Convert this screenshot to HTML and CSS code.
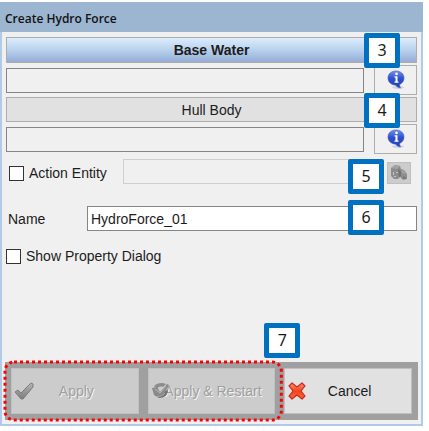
FILE: index.html
```
<!DOCTYPE html>
<html lang="en">

<head>
  <meta charset="utf-8" />
  <meta name="viewport" content="width=device-width, initial-scale=1" />
  <title>Create Hydro Force</title>
  <link rel="stylesheet" href="styles.css">
</head>

<body>
  <!-- shared icon shapes -->
  <svg class="defs" aria-hidden="true">
    <defs>
      <linearGradient id="bubble" x1="0" y1="0" x2="0" y2="1">
        <stop offset="0" stop-color="#6f8fe8" />
        <stop offset="0.45" stop-color="#2c50cf" />
        <stop offset="1" stop-color="#2741b4" />
      </linearGradient>
      <linearGradient id="cross" x1="0" y1="0" x2="0" y2="1">
        <stop offset="0" stop-color="#ff9270" />
        <stop offset="0.5" stop-color="#f4431f" />
        <stop offset="1" stop-color="#ff6a2c" />
      </linearGradient>
      <linearGradient id="check" x1="0" y1="0" x2="0" y2="1">
        <stop offset="0" stop-color="#b5b5b5" />
        <stop offset="1" stop-color="#7d7d7d" />
      </linearGradient>
    </defs>
    <symbol id="icon-info" viewBox="0 0 18 20">
      <ellipse cx="11" cy="17.5" rx="6" ry="1.5" fill="#d2d2d8" />
      <path d="M9 1C4.200 1 1 4 1 8s3.200 7 7.500 7.100c1.300 1.700 2.900 2.700 5.100 2.900-.8-1.200-1-2.200-.9-3.600C15.500 13.200 17 10.900 17 8c0-4-3.200-7-8-7z" fill="url(#bubble)" stroke="#3d59c4" stroke-width="0.6" />
      <circle cx="9.500" cy="3.900" r="1.300" fill="#fff" />
      <path d="M7.500 6.300h3v5.200h1v1.200h-4v-1.200h1V7.500h-1z" fill="#fff" />
    </symbol>
  </svg>

  <div class="window">
    <h1 class="title">Create Hydro Force</h1>

    <div class="content">
      <div class="row">
        <button type="button" class="pick active">Base Water</button>
        <span class="badge badge-top">3</span>
      </div>
      <div class="row entity">
        <input type="text" class="field" aria-label="Base Water" readonly />
        <button type="button" class="info" aria-label="Base Water info">
          <svg width="18" height="20"><use href="#icon-info" /></svg>
        </button>
      </div>
      <div class="row">
        <button type="button" class="pick">Hull Body</button>
        <span class="badge badge-top">4</span>
      </div>
      <div class="row entity">
        <input type="text" class="field" aria-label="Hull Body" readonly />
        <button type="button" class="info" aria-label="Hull Body info">
          <svg width="18" height="20"><use href="#icon-info" /></svg>
        </button>
      </div>

      <div class="row action">
        <label class="check"><input type="checkbox" />Action Entity</label>
        <input type="text" class="field" aria-label="Action Entity name" disabled />
        <button type="button" class="tool" aria-label="Select entity" disabled>
          <svg width="20" height="18" viewBox="0 0 20 18">
            <path d="M2 4l4-3 5 1 1 3 3 1 3 4v5l-4 1-3-3-2 2H5l-3-3z" fill="#8d8d8d" />
            <path d="M2 4l4-3 5 1-3 3zM12 6l3 1 2 3-4-1z" fill="#a3a3a3" />
            <path d="M4 8h1v3H4zM7 8h2v1H7zM5 12h2v1H5z" fill="#c4c4c4" />
            <path d="M9 5l3 2v5l-2 1zM14 12l3 2v1l-3-1z" fill="#737373" />
          </svg>
        </button>
        <span class="badge badge-action">5</span>
      </div>

      <div class="row name">
        <label for="force_name">Name</label>
        <input type="text" id="force_name" class="field" value="HydroForce_01" />
        <span class="badge badge-name">6</span>
      </div>

      <div class="row show">
        <label class="check"><input type="checkbox" />Show Property Dialog</label>
      </div>

      <div class="footer">
        <div class="apply-group">
          <button type="button" disabled>
            <svg class="icon" width="20" height="20" viewBox="0 0 20 20">
              <path d="M1 11l3-2 3 3L17 2l2 1v3L9 18H7z" fill="url(#check)" stroke="#7c7c7c" stroke-linejoin="round" />
            </svg>
            Apply
          </button>
          <button type="button" disabled>
            <svg class="icon" width="20" height="20" viewBox="0 0 20 20">
              <path d="M3 5C6 2 11 1 15 3l-3 3C9 5 7 6 6 8z" fill="#8c8c8c" />
              <path d="M1 7l5-1 3 5 7-8 2 1-3 5-7 8-5-3z" fill="#8a8a8a" />
              <path d="M4 13c3 2 7 2 10-3l3-1c0 5-4 8-9 8z" fill="#757575" />
              <path d="M4 8l5 4 6-7M6 15c3 1 6-1 8-3" fill="none" stroke="#bababa" />
            </svg>
            Apply &amp; Restart
          </button>
          <svg class="outline" aria-hidden="true"><rect /></svg>
          <span class="badge badge-apply">7</span>
        </div>
        <button type="button" class="cancel">
          <svg class="icon" width="20" height="20" viewBox="0 0 20 20">
            <path d="M5 2l5 4 5-4 3 3-4 5 4 5-3 3-5-4-5 4-3-3 4-5-4-5z" fill="url(#cross)" stroke="#c62a22" stroke-width="1.200" stroke-linejoin="round" />
          </svg>
          Cancel
        </button>
      </div>
    </div>
  </div>
</body>

</html>
```
FILE: styles.css
```
* {
  box-sizing: border-box;
}

body {
  margin: 0;
  padding: 2px 6px 5px 0;
  min-height: 100vh;
  display: flex;
  background: #fff;
  color: #1c1c1c;
  font-family: "Liberation Sans", Arial, sans-serif;
  font-size: 14px;
}

button,
input {
  font: inherit;
  color: inherit;
  margin: 0;
}

.defs {
  position: absolute;
  width: 0;
  height: 0;
}

.window {
  flex: 1;
  display: flex;
  flex-direction: column;
  border: 2px solid #b1cae6;
  border-top: none;
  background: #f0f0f0;
}

.title {
  margin: 0 -2px;
  padding: 0 5px;
  height: 30px;
  line-height: 33px;
  background: #9cb5d1;
  color: #111;
  font-family: "Open Sans", "Noto Sans", sans-serif;
  font-size: 12px;
  font-weight: 600;
}

.content {
  flex: 1;
  display: flex;
  flex-direction: column;
  gap: 2px;
  padding: 5px 4px 4px;
}

.row {
  position: relative;
  display: flex;
}

.pick {
  flex: 1;
  height: 25px;
  padding: 0;
  border: 1px solid #adadad;
  background: #e1e1e1;
}

.pick.active {
  height: 26px;
  background: linear-gradient(#dcedfc, #b9d1ed 50%, #94add5);
  font-weight: bold;
}

.field {
  flex: 1;
  min-width: 0;
  height: 25px;
  padding: 0 3px;
  border: 1px solid #858585;
  border-radius: 0;
  background: #f0f0f0;
  outline: none;
}

.entity {
  height: 30px;
  align-items: center;
  gap: 10px;
}

.info {
  width: 43px;
  height: 30px;
  padding: 0;
  border: 1px solid #adadad;
  background: #f0f0f0;
}

.info svg,
.tool svg {
  display: block;
  margin: 0 auto;
}

.action {
  margin-top: 3px;
  padding: 0 6px 0 3px;
  height: 28px;
  align-items: center;
}

.action .check {
  width: 114px;
}

.action .field {
  align-self: flex-start;
  margin-right: 8px;
  border-color: #cfcfcf;
}

.check {
  display: flex;
  align-items: center;
  gap: 5px;
}

.check input {
  appearance: none;
  width: 15px;
  height: 15px;
  border: 1px solid #333;
  background: #fff;
}

.tool {
  width: 24px;
  height: 22px;
  padding: 0;
  border: 1px solid #bfbfbf;
  background: #cccccc;
}

.name {
  margin-top: 17px;
  align-items: center;
}

.name label {
  width: 81px;
  padding-left: 2px;
}

.name .field {
  background: #fff;
}

.show {
  margin-top: 15px;
}

.footer {
  display: grid;
  grid-template-columns: repeat(3, 1fr);
  gap: 9px;
  margin: auto -1px 0;
  padding: 6px;
  background: #a0a0a0;
}

.apply-group {
  position: relative;
  grid-column: span 2;
  display: grid;
  grid-template-columns: repeat(2, 1fr);
  gap: 9px;
}

.footer button {
  position: relative;
  height: 46px;
  padding: 0 0 0 3px;
  border: 1px solid #c0c0c0;
  background: #cccccc;
  white-space: nowrap;
}

.footer button:disabled {
  color: #a0a0a0;
  text-shadow: 1px 1px #f4f4f4;
}

.footer .cancel {
  background: #e1e1e1;
}

.icon {
  position: absolute;
  left: 2px;
  top: 12px;
}

/* dotted marker round the two apply buttons */
.outline {
  position: absolute;
  inset: -6px;
  width: calc(100% + 12px);
  height: calc(100% + 12px);
  overflow: visible;
  pointer-events: none;
}

.outline rect {
  width: 100%;
  height: 100%;
  rx: 9px;
  fill: none;
  stroke: #f00;
  stroke-width: 3px;
  stroke-dasharray: 3 3;
}

/* numbered callouts */
.badge {
  position: absolute;
  z-index: 1;
  width: 36px;
  height: 35px;
  border: 5px solid #0070c0;
  border-radius: 2px;
  background: #fff;
  font-family: "Noto Sans", sans-serif;
  font-size: 16px;
  line-height: 25px;
  text-align: center;
  text-shadow: none;
}

.badge-top {
  right: 17px;
  top: -4px;
}

.badge-action {
  right: 33px;
  top: 0;
}

.badge-name {
  right: 33px;
  top: -6px;
}

.badge-apply {
  right: -25px;
  top: -45px;
}
```
